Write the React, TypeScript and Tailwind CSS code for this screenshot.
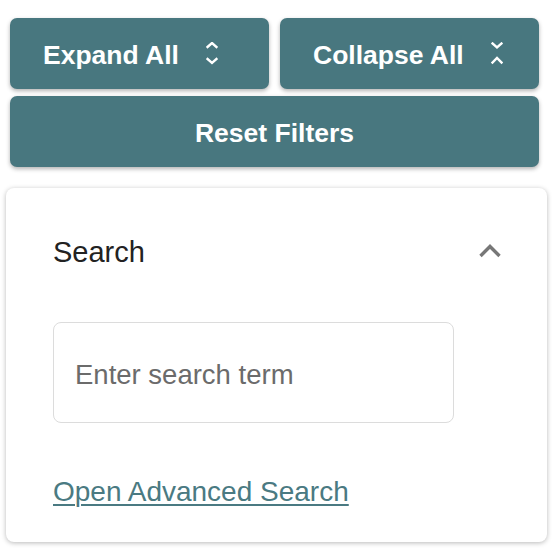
import React, { useState } from 'react'

const font = { fontFamily: '"Liberation Sans", Arial, Helvetica, sans-serif' }

const ExpandIcon = () => (
  <svg width="12" height="23" viewBox="0 0 12 23" fill="none" stroke="white" strokeWidth="2.4" strokeLinecap="square">
    <polyline points="1.5,5 6,1 10.5,5" />
    <polyline points="1.5,17 6,21 10.5,17" />
  </svg>
)

const CollapseIcon = () => (
  <svg width="12" height="23" viewBox="0 0 12 23" fill="none" stroke="white" strokeWidth="2.4" strokeLinecap="square">
    <polyline points="1.5,1.5 6,5.5 10.5,1.5" />
    <polyline points="1.5,20.5 6,16 10.5,20.5" />
  </svg>
)

const ChevronUp = () => (
  <svg width="22" height="15" viewBox="0 0 22 15" fill="none" stroke="#777777" strokeWidth="3.4">
    <polyline points="1.5,13 11,3.5 20.5,13" />
  </svg>
)

const ActionButton = ({ label, icon }: { label: string; icon?: React.ReactNode }) => (
  <button
    type="button"
    className="flex-1 h-[71px] flex items-center pl-[33px] gap-[27px] rounded-[7px] bg-[#48777f] text-white font-bold text-[26.5px] leading-none shadow-[0_2px_4px_rgba(0,0,0,0.3)]"
  >
    <span className="pt-[3px]">{label}</span>
    {icon}
  </button>
)

export default function App() {
  const [open, setOpen] = useState(true)
  const [term, setTerm] = useState('')

  return (
    <div className="w-[554px] h-[550px] bg-white overflow-hidden" style={font}>
      <div className="w-[529px] ml-[10px] pt-[18px] flex flex-col gap-[7px]">
        <div className="flex gap-[11px]">
          <ActionButton label="Expand All" icon={<ExpandIcon />} />
          <ActionButton label="Collapse All" icon={<CollapseIcon />} />
        </div>
        <button
          type="button"
          className="h-[71px] flex items-center justify-center pt-[3px] rounded-[7px] bg-[#48777f] text-white font-bold text-[26.5px] leading-none shadow-[0_2px_4px_rgba(0,0,0,0.3)]"
        >
          Reset Filters
        </button>
      </div>

      <div className="mt-[21px] ml-[6px] w-[541px] h-[354px] bg-white rounded-[8px] shadow-[0_1px_5px_rgba(0,0,0,0.28)] pl-[47px] pr-[46px] pt-[50px] flex flex-col">
        <div className="flex items-center justify-between">
          <h2 className="text-[29px] leading-none text-[#222222]">Search</h2>
          <button type="button" onClick={() => setOpen(!open)} aria-label="Toggle search" className="-mt-[5px]">
            <ChevronUp />
          </button>
        </div>

        <input
          value={term}
          onChange={(e) => setTerm(e.target.value)}
          placeholder="Enter search term"
          className="mt-[55px] w-[401px] h-[101px] border border-[#dcdcdc] rounded-[8px] pl-[21px] pt-[4px] text-[27.5px] text-[#333] placeholder:text-[#6b6b6b] outline-none"
        />

        <a href="#" className="mt-[55px] text-[28px] leading-none text-[#4a7a82] underline underline-offset-[3px] decoration-[2px] w-fit">
          Open Advanced Search
        </a>
      </div>
    </div>
  )
}
